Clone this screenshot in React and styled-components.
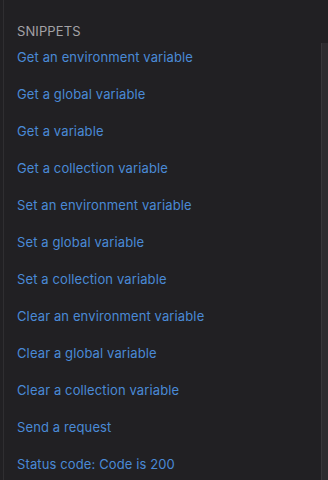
import styled, { createGlobalStyle } from 'styled-components';

const GlobalStyle = createGlobalStyle`
  html, body {
    margin: 0;
    padding: 0;
    background: #212023;
  }
  body {
    font-family: Inter, "Noto Sans", sans-serif;
  }
`;

const snippets = [
  'Get an environment variable',
  'Get a global variable',
  'Get a variable',
  'Get a collection variable',
  'Set an environment variable',
  'Set a global variable',
  'Set a collection variable',
  'Clear an environment variable',
  'Clear a global variable',
  'Clear a collection variable',
  'Send a request',
  'Status code: Code is 200',
];

export default function App() {
  return (
    <>
      <GlobalStyle />
      <SPanel>
        <SList>
          <SHead>SNIPPETS</SHead>
          {snippets.map((s) => (
            <SItem key={s}>{s}</SItem>
          ))}
        </SList>
        <SScrollbar />
      </SPanel>
    </>
  );
}

const SPanel = styled.div`
  width: 325px;
  height: 480px;
  margin-left: 3px;
  box-sizing: border-box;
  overflow: hidden;
  display: flex;
  background: #212023;
  border-left: 1px solid #2f2e31;
`;
const SList = styled.div`
  flex: 1;
  display: flex;
  flex-direction: column;
  padding: 22px 0 0 13px;
`;
const SHead = styled.div`
  color: #a3a2a6;
  font-size: 13px;
  line-height: 18px;
  letter-spacing: 0.1px;
  margin-bottom: 8px;
`;
const SItem = styled.div`
  color: #4a8ad6;
  font-size: 13px;
  line-height: 18px;
  letter-spacing: 0.12px;
  margin-bottom: 19px;
  cursor: pointer;
`;
const SScrollbar = styled.div`
  width: 6px;
  margin-top: 43px;
  background: #2d2c2f;
  border-left: 1px solid #38373a;
`;
